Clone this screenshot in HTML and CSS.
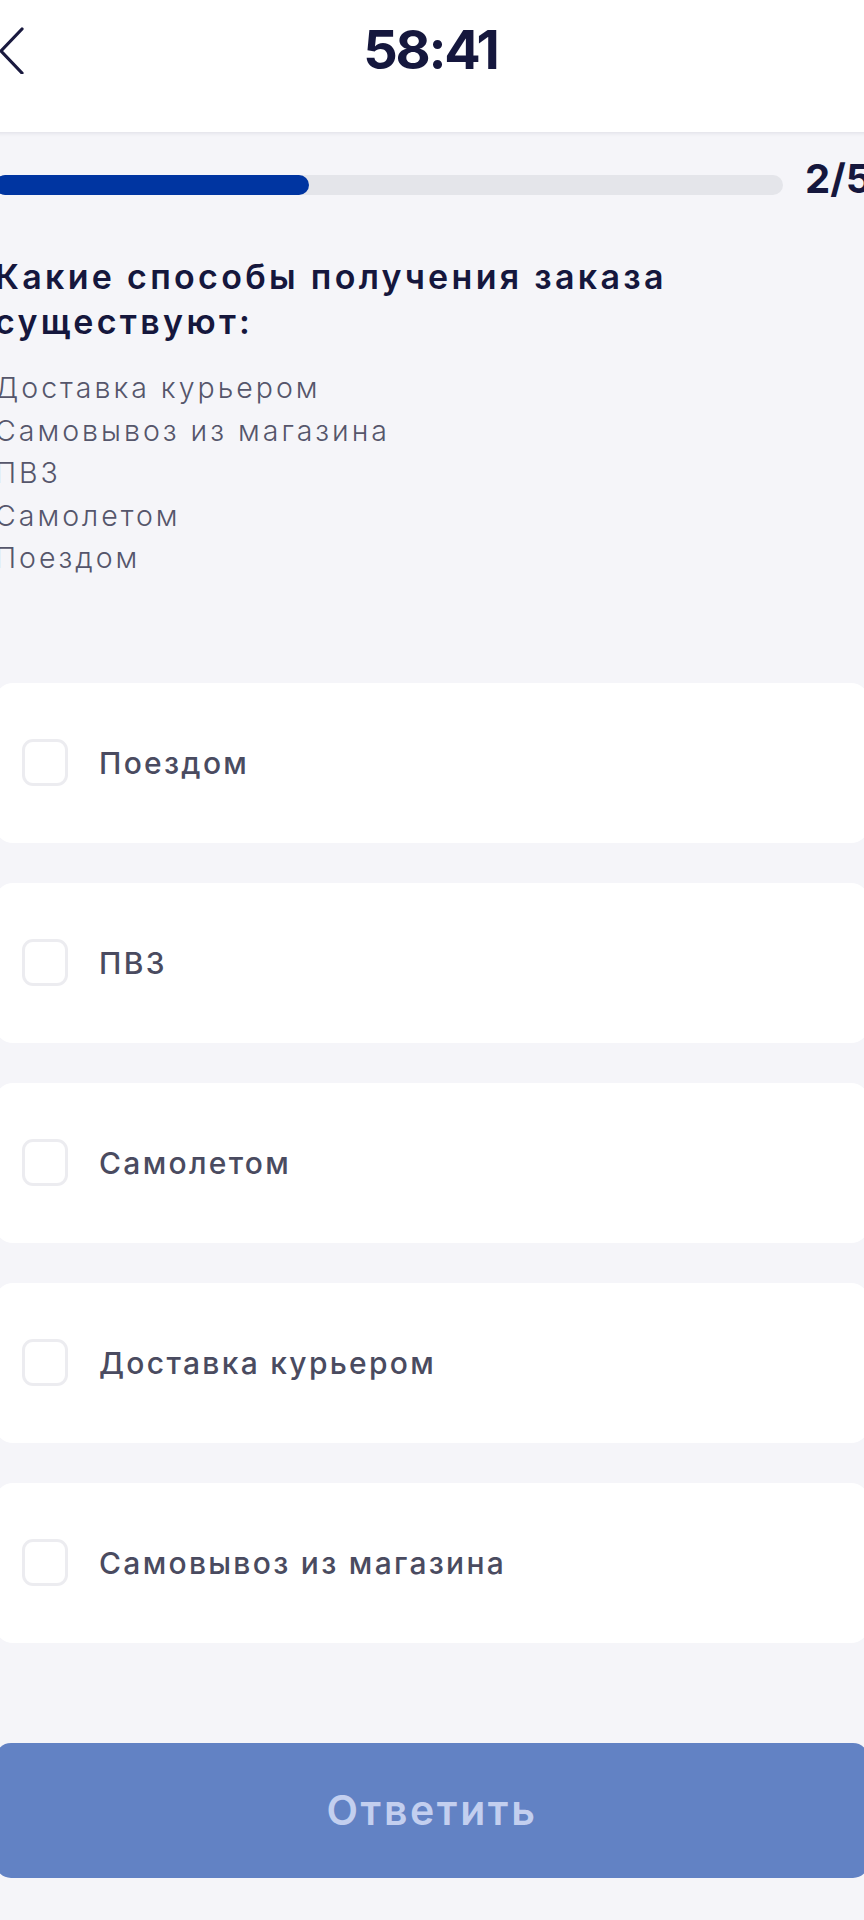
FILE: index.html
```html
<!DOCTYPE html>
<html lang="ru">
<head>
<meta charset="utf-8">
<title>Тест</title>
<link rel="stylesheet" href="styles.css">
</head>
<body>
<div class="screen">
  <header class="topbar">
    <button class="back" aria-label="Назад">
      <svg width="26" height="48" viewBox="0 0 26 48"><path d="M24 3 L3 25 L24 47" fill="none" stroke="#1a1a3f" stroke-width="3.2" stroke-linecap="round" stroke-linejoin="round"/></svg>
    </button>
    <div class="timer">58:41</div>
    <div></div>
  </header>

  <main class="content">
    <div class="progress">
      <div class="track"><div class="fill" style="width: 39.9%"></div></div>
      <div class="step">2/5</div>
    </div>

    <h1 class="question">Какие способы получения заказа<br>существуют:</h1>
    <div class="desc">
      <p>Доставка курьером</p>
      <p>Самовывоз из магазина</p>
      <p>ПВЗ</p>
      <p>Самолетом</p>
      <p>Поездом</p>
    </div>

    <ul class="options">
      <li class="option"><span class="box"></span><span class="label">Поездом</span></li>
      <li class="option"><span class="box"></span><span class="label">ПВЗ</span></li>
      <li class="option"><span class="box"></span><span class="label">Самолетом</span></li>
      <li class="option"><span class="box"></span><span class="label">Доставка курьером</span></li>
      <li class="option"><span class="box"></span><span class="label">Самовывоз из магазина</span></li>
    </ul>

    <button class="submit" disabled>Ответить</button>
  </main>
</div>
</body>
</html>
```

FILE: styles.css
```css
html, body {
  margin: 0;
  padding: 0;
  background: #f5f5f9;
  overflow: hidden;
}

body {
  width: 864px;
  height: 1920px;
  font-family: Inter, "Noto Sans", sans-serif;
  color: #15173d;
}

.screen {
  width: 874px;
  margin-left: -5px;
}

/* top bar with the countdown */
.topbar {
  height: 132px;
  background: #ffffff;
  box-shadow: 0 1px 4px rgba(20, 20, 60, 0.10);
  display: grid;
  grid-template-columns: 1fr auto 1fr;
  align-items: center;
}

.back {
  justify-self: start;
  background: none;
  border: 0;
  padding: 0;
  margin: -32px 0 0 3px;
  display: flex;
  align-items: center;
  height: 48px;
}

.timer {
  font-size: 54px;
  font-weight: 700;
  letter-spacing: -2.2px;
  line-height: 1;
  margin-top: -32px;
  margin-left: -3px;
  color: #15173d;
}

.content {
  display: flex;
  flex-direction: column;
}

/* progress */
.progress {
  margin-top: 33px;
  height: 40px;
  display: flex;
  align-items: center;
  gap: 22px;
}

.track {
  flex: 1;
  height: 20px;
  border-radius: 10px;
  background: #e4e5ea;
  overflow: hidden;
}

.fill {
  height: 100%;
  background: #0035a1;
  border-radius: 10px;
}

.step {
  font-size: 40px;
  font-weight: 700;
  line-height: 1;
  margin-top: -12px;
  width: 64px;
  white-space: nowrap;
}

/* question */
.question {
  margin: 49px 0 0;
  font-size: 34px;
  line-height: 45px;
  font-weight: 600;
  letter-spacing: 3.3px;
  color: #15173d;
}

.desc {
  margin-top: 23px;
  font-size: 28.5px;
  line-height: 42.5px;
  font-weight: 300;
  letter-spacing: 3px;
  color: #55566b;
}

.desc p {
  margin: 0;
}

/* answer options */
.options {
  list-style: none;
  margin: 103px 0 0;
  padding: 0;
  display: flex;
  flex-direction: column;
  gap: 40px;
}

.option {
  height: 160px;
  background: #ffffff;
  border-radius: 18px;
  display: flex;
  align-items: center;
  padding-left: 27px;
}

.box {
  width: 40px;
  height: 41px;
  border: 3px solid #ececf0;
  border-radius: 11px;
  flex: none;
}

.label {
  margin-left: 31px;
  font-size: 30px;
  font-weight: 500;
  letter-spacing: 2.3px;
  color: #4a4b60;
}

/* submit */
.submit {
  margin-top: 100px;
  height: 135px;
  border: 0;
  border-radius: 16px;
  background: #6282c4;
  color: #c3cfef;
  font-family: inherit;
  font-size: 41px;
  font-weight: 600;
  letter-spacing: 2.6px;
}
```
